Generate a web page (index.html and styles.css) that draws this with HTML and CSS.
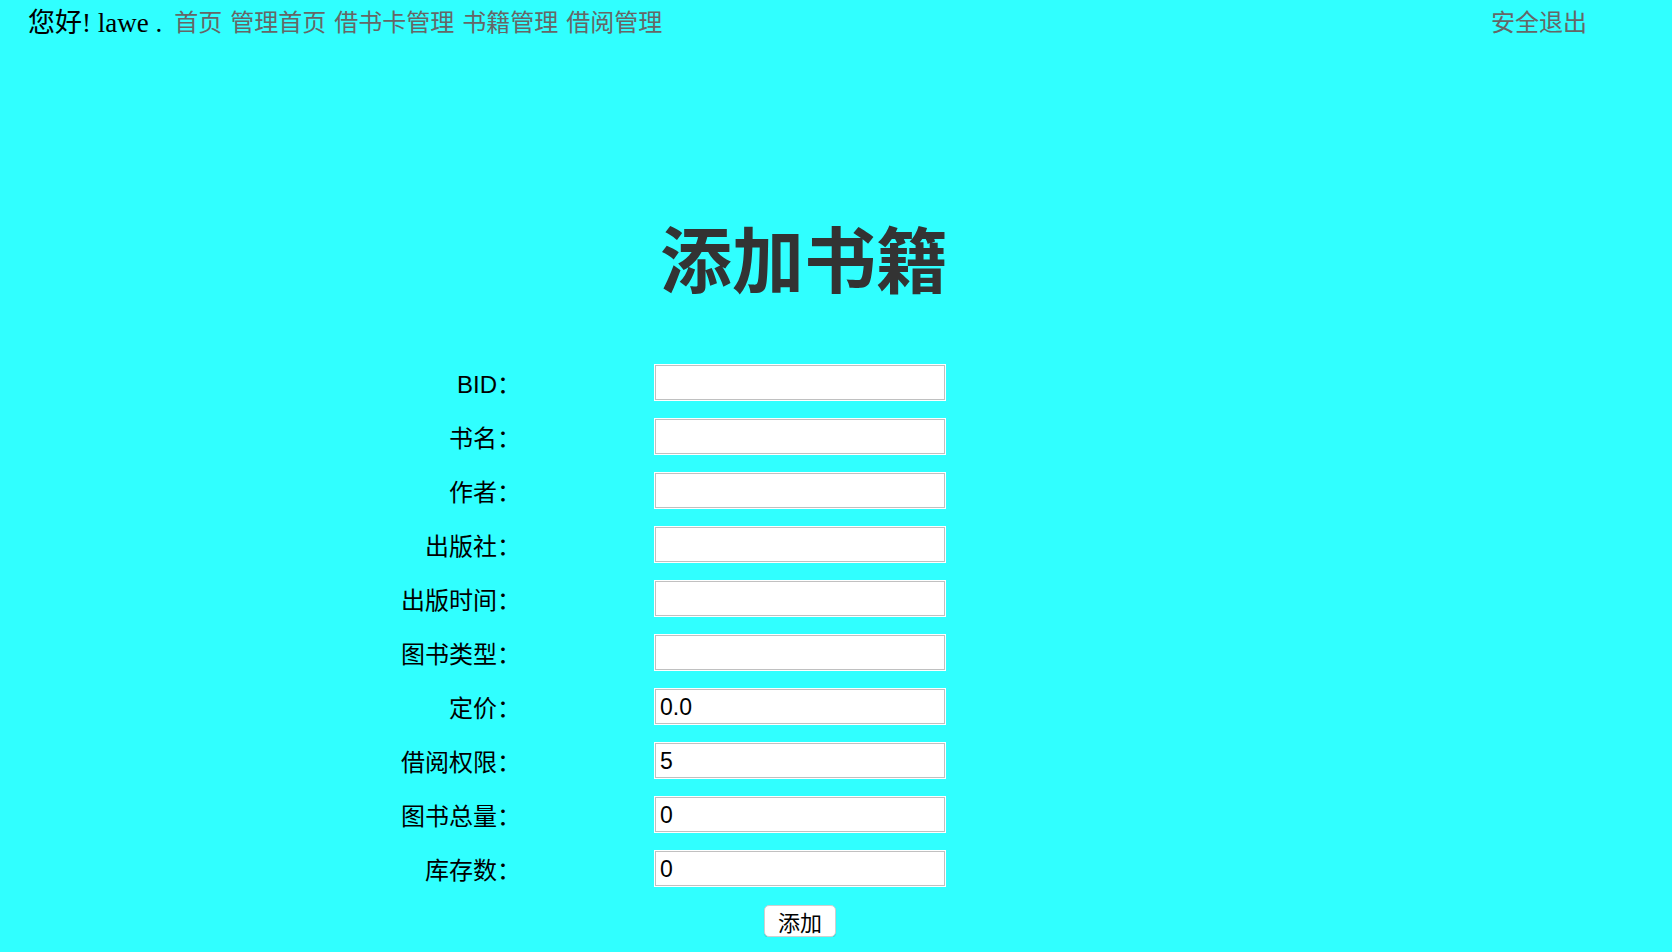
FILE: index.html
```html
<!DOCTYPE html>
<html lang="zh-CN">
<head>
<meta charset="utf-8">
<title>添加书籍</title>
<link rel="stylesheet" href="styles.css">
</head>
<body>
<header class="topbar">
  <div class="topbar-left">
    <span class="greet">您好! lawe .</span>
    <nav class="nav">
      <a class="nav-link" href="#">首页</a>
      <a class="nav-link" href="#">管理首页</a>
      <a class="nav-link" href="#">借书卡管理</a>
      <a class="nav-link" href="#">书籍管理</a>
      <a class="nav-link" href="#">借阅管理</a>
    </nav>
  </div>
  <a class="nav-link logout" href="#">安全退出</a>
</header>

<main class="main">
  <div class="title-row">
    <h1 class="title">添加书籍</h1>
  </div>
  <form class="book-form">
    <label class="field-label">BID：</label><input class="field-input" type="text" value="">
    <label class="field-label">书名：</label><input class="field-input" type="text" value="">
    <label class="field-label">作者：</label><input class="field-input" type="text" value="">
    <label class="field-label">出版社：</label><input class="field-input" type="text" value="">
    <label class="field-label">出版时间：</label><input class="field-input" type="text" value="">
    <label class="field-label">图书类型：</label><input class="field-input" type="text" value="">
    <label class="field-label">定价：</label><input class="field-input" type="text" value="0.0">
    <label class="field-label">借阅权限：</label><input class="field-input" type="text" value="5">
    <label class="field-label">图书总量：</label><input class="field-input" type="text" value="0">
    <label class="field-label">库存数：</label><input class="field-input" type="text" value="0">
    <div class="actions"><button class="submit-btn" type="button">添加</button></div>
  </form>
</main>
</body>
</html>
```

FILE: styles.css
```css
html, body {
  margin: 0;
  padding: 0;
}

body {
  background: #30ffff;
  font-family: "Liberation Sans", "Noto Sans CJK SC", sans-serif;
  color: #000;
  overflow: hidden;
}

.topbar {
  display: flex;
  justify-content: space-between;
  align-items: center;
  height: 40px;
  padding: 0 85px 0 28px;
}

.topbar-left {
  display: flex;
  align-items: center;
}

.greet {
  font-family: "Liberation Serif", "Noto Sans CJK SC", serif;
  font-size: 27px;
  color: #000;
  margin-right: 12px;
  white-space: nowrap;
}

.nav {
  display: flex;
  gap: 8px;
}

.nav-link {
  font-family: "Noto Sans CJK SC", "Liberation Sans", sans-serif;
  font-size: 24px;
  color: #666;
  text-decoration: none;
  white-space: nowrap;
}

.main {
  padding-top: 180px;
}

.title-row {
  display: flex;
  justify-content: center;
  width: 1608px;
}

.title {
  margin: 0;
  font-family: "Noto Sans CJK SC", serif;
  font-size: 72px;
  line-height: 72px;
  font-weight: bold;
  color: #333;
  white-space: nowrap;
}

.book-form {
  display: grid;
  grid-template-columns: 160px 292px;
  column-gap: 133px;
  row-gap: 17px;
  align-items: center;
  margin: 72px 0 0 361px;
}

.field-label {
  font-family: "Liberation Sans", "Noto Sans CJK SC", sans-serif;
  font-size: 24px;
  text-align: right;
  white-space: nowrap;
}

.field-input {
  box-sizing: border-box;
  width: 290px;
  height: 35px;
  margin: 1px;
  padding: 2px 4px 0;
  border: 1px solid #c0c0c0;
  box-shadow: 0 0 0 1px #fff;
  background: #fff;
  font-family: "Liberation Sans", sans-serif;
  font-size: 23px;
  color: #000;
  outline: none;
}

.actions {
  grid-column: 2;
  display: flex;
  justify-content: center;
  margin-top: 1px;
}

.submit-btn {
  box-sizing: border-box;
  width: 72px;
  height: 32px;
  padding: 0;
  border: 1px solid #cfcfcf;
  border-radius: 5px;
  background: #fff;
  box-shadow: 0 1px 1px rgba(0, 0, 0, 0.15);
  font-family: "Noto Sans CJK SC", sans-serif;
  font-size: 22px;
  line-height: 28px;
  color: #000;
}
```
